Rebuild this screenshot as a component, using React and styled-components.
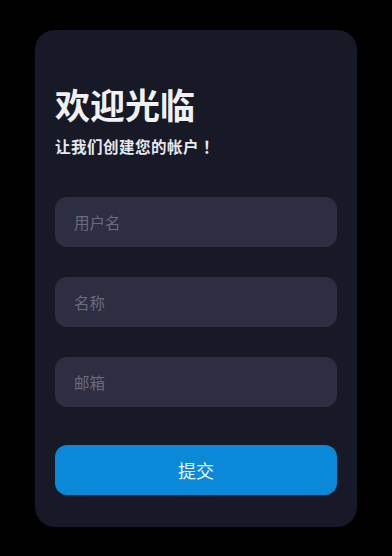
import styled, { createGlobalStyle } from "styled-components";

const GlobalStyle = createGlobalStyle`
  html, body {
    margin: 0;
    padding: 0;
    background: #000;
  }
  body {
    font-family: "Noto Sans CJK SC", "Noto Sans", sans-serif;
  }
`;

const Page = styled.div`
  min-height: 100vh;
  display: flex;
  align-items: center;
  justify-content: center;
`;

const Card = styled.form`
  width: 322px;
  box-sizing: border-box;
  padding: 52px 20px 32px;
  background: #171927;
  border-radius: 20px;
  display: flex;
  flex-direction: column;
`;

const Title = styled.h1`
  margin: 0;
  font-size: 35px;
  line-height: 44px;
  font-weight: 700;
  color: #f1f1f5;
`;

const Subtitle = styled.p`
  margin: 9px 0 40px;
  font-size: 15.5px;
  line-height: 22px;
  font-weight: 700;
  letter-spacing: 0.5px;
  color: #e8e8ee;
`;

// full-width mark sits centred in its cell in the reference font
const Bang = styled.span`
  margin-left: 4px;
`;

const Field = styled.input`
  height: 50px;
  box-sizing: border-box;
  border: none;
  outline: none;
  border-radius: 12px;
  padding: 0 19px;
  margin-bottom: ${(p) => p.$gap}px;
  background: #2d2e41;
  color: #e8e8ee;
  font-family: inherit;
  font-size: 15.5px;

  &::placeholder {
    color: #6a6b7e;
  }
`;

const Submit = styled.button`
  height: 50px;
  border: none;
  border-radius: 12px;
  background: #0a89d8;
  color: #eef6fc;
  font-family: inherit;
  font-size: 18px;
  cursor: pointer;
`;

export default function App() {
  return (
    <>
      <GlobalStyle />
      <Page>
        <Card onSubmit={(e) => e.preventDefault()}>
          <Title>欢迎光临</Title>
          <Subtitle>
            让我们创建您的帐户<Bang>！</Bang>
          </Subtitle>
          <Field $gap={30} placeholder="用户名" />
          <Field $gap={30} placeholder="名称" />
          <Field $gap={38} placeholder="邮箱" />
          <Submit type="submit">提交</Submit>
        </Card>
      </Page>
    </>
  );
}
